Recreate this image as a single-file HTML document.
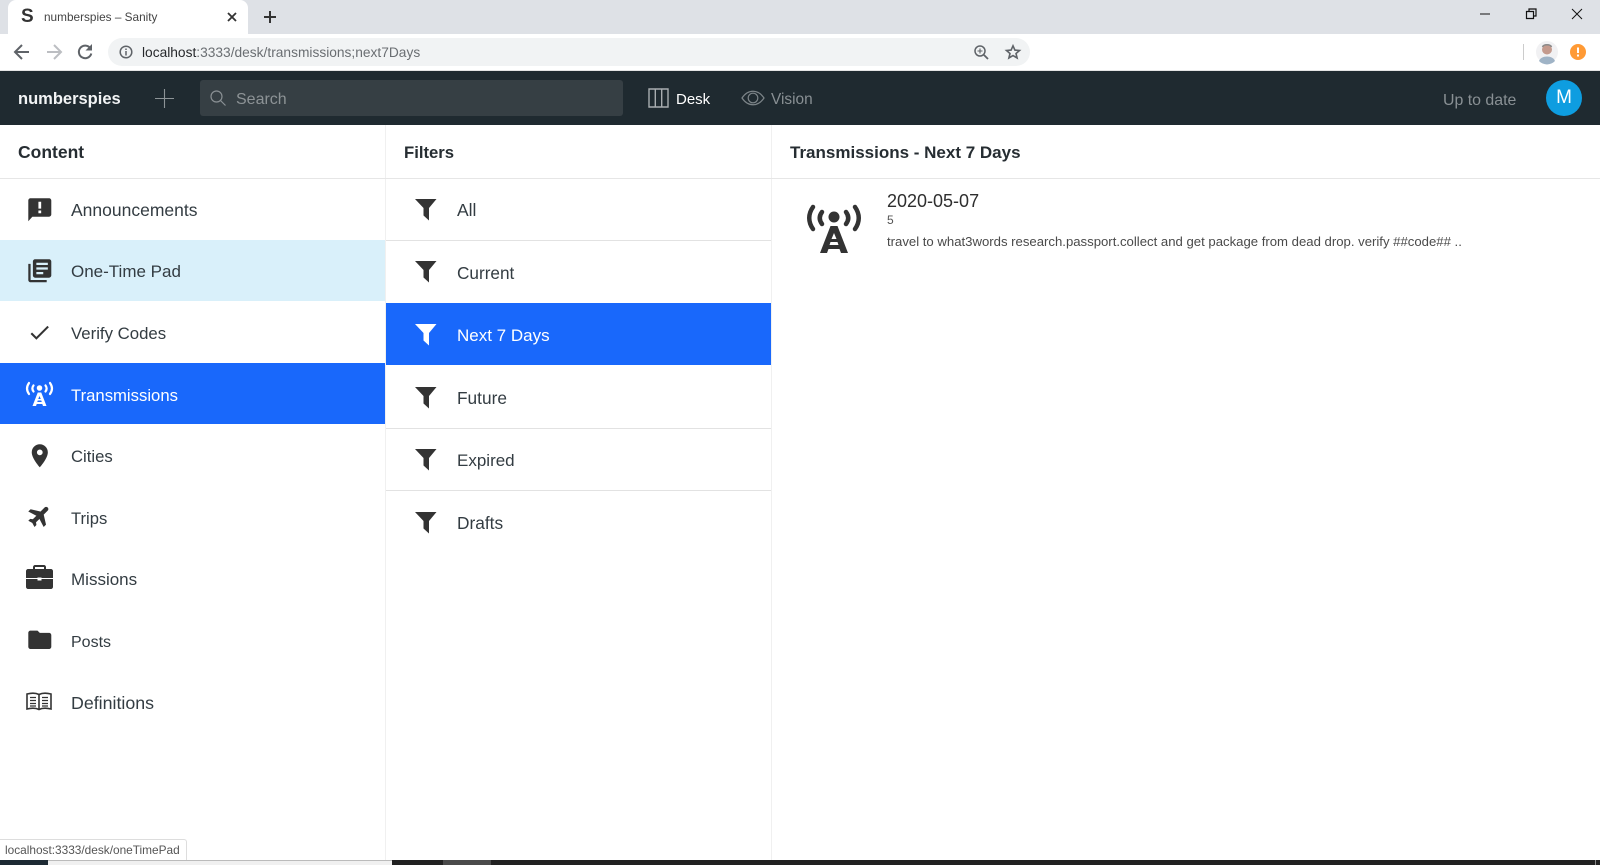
<!DOCTYPE html>
<html><head><meta charset="utf-8"><title>numberspies – Sanity</title>
<style>
html,body{margin:0;padding:0;width:1600px;height:865px;overflow:hidden;background:#fff;font-family:"Liberation Sans",sans-serif}
.a{position:absolute}
.t{position:absolute;white-space:nowrap;line-height:24px;height:24px;margin-top:-12px;color:#333c42;font-size:17.5px}
.h{font-weight:bold;color:#262d32;font-size:17px}
svg{position:absolute;overflow:visible}
.i{fill:#333}
.w{color:#fff}
</style></head><body>
<!-- chrome -->
<div class="a" style="left:0;top:0;width:1600px;height:34px;background:#dee1e6"></div>
<div class="a" style="left:8px;top:0;width:240px;height:34px;background:#fff;border-radius:8px 8px 0 0"></div>
<div class="t" style="left:21px;top:17px;font-size:19px;font-weight:bold;color:#333">S</div>
<div class="t" style="left:44px;top:17px;font-size:11.8px;color:#444">numberspies – Sanity</div>
<svg style="left:0;top:0" width="300" height="34"><path d="M228 13l8 8M236 13l-8 8" stroke="#333" stroke-width="1.8"/><path d="M270 11v12M264 17h12" stroke="#333" stroke-width="2"/></svg>
<svg style="left:0;top:34px" width="110" height="36"><g fill="none" stroke-width="2"><path d="M29 18H16M22 11l-7 7 7 7" stroke="#5f6368"/><path d="M47 18h13M54 11l7 7-7 7" stroke="#bcbec2"/><path d="M90.500 14.500a6.300 6.300 0 1 0 .8 5" stroke="#5f6368"/></g><path d="M92 10v6.500h-6.500z" fill="#5f6368"/></svg>
<div class="a" style="left:108px;top:38px;width:922px;height:28px;background:#f1f3f4;border-radius:14px"></div>
<svg style="left:119px;top:45px" width="14" height="14"><circle cx="7" cy="7" r="5.8" fill="none" stroke="#5f6368" stroke-width="1.5"/><path d="M7 6v4.500M7 3.500v1.500" stroke="#5f6368" stroke-width="1.5"/></svg>
<div class="t" style="left:142px;top:53px;font-size:13.75px;color:#6a6e72"><span style="color:#26282b">localhost</span>:3333/desk/transmissions;next7Days</div>
<svg style="left:973px;top:44px" width="16" height="16"><circle cx="7" cy="7" r="5" fill="none" stroke="#5f6368" stroke-width="1.5"/><path d="M11 11l4 4" stroke="#5f6368" stroke-width="1.8"/><path d="M7 4.500v5M4.500 7h5" stroke="#5f6368" stroke-width="1.1"/></svg>
<svg style="left:1005px;top:44px" width="16" height="16"><path d="M8 1.800l1.900 4.300 4.600.4-3.500 3 1.100 4.500-4.100-2.400-4.100 2.400 1.100-4.500-3.500-3 4.600-.4z" fill="none" stroke="#5f6368" stroke-width="1.6"/></svg>
<div class="a" style="left:1523px;top:44px;width:1px;height:16px;background:#ccc"></div>
<svg style="left:1536px;top:41px" width="22" height="22"><circle cx="11" cy="11" r="11" fill="#f1f1f3"/><circle cx="11" cy="8.500" r="5" fill="#c49a8d"/><path d="M3 20c2-6 14-6 16 0a11 11 0 0 1-16 0z" fill="#9fb3c6"/><path d="M6.500 6c1-3 8-3 9 0" fill="none" stroke="#8a8a8a" stroke-width="1.5"/></svg>
<svg style="left:1570px;top:44px" width="16" height="16"><circle cx="8" cy="8" r="8" fill="#ff9a35"/><path d="M8 3.500v5.500M8 10.500v2" stroke="#fff" stroke-width="2"/></svg>
<svg style="left:1470px;top:4px" width="125" height="24"><path d="M10 10h10" stroke="#111" stroke-width="1"/><path d="M56.500 7.500h7v7h-7zM59 7.500v-2.500h7v7h-2.500" fill="none" stroke="#111" stroke-width="1.2"/><path d="M102 5l10 10M112 5l-10 10" stroke="#111" stroke-width="1"/></svg>
<div class="a" style="left:0;top:70px;width:1600px;height:1px;background:#e4e4e4"></div>
<!-- nav -->
<div class="a" style="left:0;top:71px;width:1600px;height:54px;background:#1f2a30"></div>
<div class="t h" style="left:18px;top:99px;color:#f2f4f5;font-size:16.5px">numberspies</div>
<svg style="left:155px;top:89px" width="19" height="19"><path d="M9.500 0v19M0 9.500h19" stroke="#8d9497" stroke-width="1.1"/></svg>
<div class="a" style="left:200px;top:80px;width:423px;height:36px;background:#363f44;border-radius:3px"></div>
<svg style="left:210px;top:90px" width="16" height="16"><circle cx="6.500" cy="6.500" r="5.500" fill="none" stroke="#8a9094" stroke-width="1.2"/><path d="M10.500 10.500l5 5" stroke="#8a9094" stroke-width="1.2"/></svg>
<div class="t" style="left:236px;top:100px;color:#8d9396;font-size:16px">Search</div>
<svg style="left:648px;top:88px" width="21" height="20"><path d="M1 1h19v18H1zM7.300 1v18M13.700 1v18" fill="none" stroke="#a8adb0" stroke-width="1.4"/></svg>
<div class="t w" style="left:676px;top:100px;font-size:15px">Desk</div>
<svg style="left:741px;top:90px" width="24" height="16"><path d="M1 8c6-9 16-9 22 0-6 9-16 9-22 0z" fill="none" stroke="#7c8488" stroke-width="1.2"/><circle cx="12" cy="8" r="4.800" fill="none" stroke="#7c8488" stroke-width="1.2"/></svg>
<div class="t" style="left:771px;top:100px;font-size:15.4px;color:#899094">Vision</div>
<div class="t" style="left:1443px;top:101px;font-size:15.9px;color:#899094">Up to date</div>
<div class="a" style="left:1546px;top:80px;width:36px;height:36px;border-radius:50%;background:#0e9de0;color:#fff;text-align:center;font-size:19px;line-height:36px">M</div>
<!-- pane dividers -->
<div class="a" style="left:385px;top:125px;width:1px;height:735px;background:#f0f0f0"></div>
<div class="a" style="left:771px;top:125px;width:1px;height:735px;background:#f0f0f0"></div>
<div class="a" style="left:0;top:178px;width:1600px;height:1px;background:#e6e6e6"></div>
<div class="t h" style="left:18px;top:152px;font-size:17.5px">Content</div>
<div class="t h" style="left:404px;top:153px;font-size:16.7px">Filters</div>
<div class="t h" style="left:790px;top:153px">Transmissions - Next 7 Days</div>
<!-- left list -->
<div class="a" style="left:0;top:240px;width:385px;height:61px;background:#d9f0fa"></div>
<div class="a" style="left:0;top:363px;width:385px;height:61px;background:#1968fb"></div>
<div class="t" style="left:71px;top:210px">Announcements</div>
<div class="t" style="left:71px;top:272px;font-size:17px">One-Time Pad</div>
<div class="t" style="left:71px;top:334px;font-size:16.8px">Verify Codes</div>
<div class="t w" style="left:71px;top:396px;font-size:16.7px">Transmissions</div>
<div class="t" style="left:71px;top:457px;font-size:16.7px">Cities</div>
<div class="t" style="left:71px;top:519px;font-size:16.6px">Trips</div>
<div class="t" style="left:71px;top:580px;font-size:17px">Missions</div>
<div class="t" style="left:71px;top:643px;font-size:16px">Posts</div>
<div class="t" style="left:71px;top:703px;font-size:17.8px">Definitions</div>
<svg class="i" style="left:25.700px;top:195.700px" width="27.600" height="27.600" viewBox="0 0 24 24"><path d="M20 2H4c-1.100 0-2 .9-2 2v18l3.500-4H20c1.100 0 2-.9 2-2V4c0-1.100-.9-2-2-2zm-6.800 9h-2.400V5h2.400v6zm0 4h-2.400v-2.400h2.400V15z"/></svg>
<svg class="i" style="left:25.700px;top:256.700px" width="27.600" height="27.600" viewBox="0 0 24 24"><path d="M4 6H2v14c0 1.100.9 2 2 2h14v-2H4V6zm16-4H8c-1.100 0-2 .9-2 2v12c0 1.100.9 2 2 2h12c1.100 0 2-.9 2-2V4c0-1.100-.9-2-2-2zm-1 9H9V9h10v2zm-4 4H9v-2h6v2zm4-8H9V5h10v2z"/></svg>
<svg class="i" style="left:26.500px;top:320px" width="25" height="25" viewBox="0 0 24 24"><path d="M9 16.170L4.830 12l-1.420 1.410L9 19 21 7l-1.410-1.410z"/></svg>
<svg style="left:26px;top:381px" width="27" height="26" viewBox="0 0 54 50"><g fill="none" stroke="#fff" stroke-width="4.500" stroke-linecap="round"><path d="M6 3c-5 7-5 15 0 22M48 3c5 7 5 15 0 22M15 8c-3 4-3 8 0 12M39 8c3 4 3 8 0 12"/></g><circle cx="27" cy="13" r="5.500" fill="#fff"/><path fill="#fff" fill-rule="evenodd" d="M23.500 22h7l10.500 27h-7l-1.500-4h-11L20 49h-7zM27 29l-2.500 6h5zM23.500 38l-1 3h9l-1-3z"/></svg>
<svg class="i" style="left:25.700px;top:441.700px" width="27.600" height="27.600" viewBox="0 0 24 24"><path d="M12 2C8.130 2 5 5.130 5 9c0 5.250 7 13 7 13s7-7.750 7-13c0-3.870-3.130-7-7-7zm0 9.500a2.500 2.500 0 0 1 0-5 2.500 2.500 0 0 1 0 5z"/></svg>
<svg class="i" style="left:27px;top:503px" width="26" height="26" viewBox="0 0 24 24"><path stroke="#333" stroke-width="1.1" transform="rotate(45 12 12)" d="M21 16v-2l-8-5V3.500c0-.83-.67-1.500-1.500-1.500S10 2.670 10 3.500V9l-8 5v2l8-2.500V19l-2 1.500V22l3.500-1 3.500 1v-1.500L13 19v-5.500l8 2.500z"/></svg>
<svg style="left:26px;top:565px" width="27" height="24" viewBox="0 0 27 24"><path class="i" fill-rule="evenodd" d="M9 0h9c1 0 2 1 2 2v2h5c1 0 2 1 2 2v16c0 1-1 2-2 2H2c-1 0-2-1-2-2V6c0-1 1-2 2-2h5V2c0-1 1-2 2-2zm0 2v2h9V2z"/><path d="M0 13.500h27" stroke="#fff" stroke-width="1"/><path d="M11.500 12.500h4v3h-4z" fill="#fff"/></svg>
<svg class="i" style="left:25.700px;top:626.400px" width="27.600" height="27.600" viewBox="0 0 24 24"><path d="M10 4H4c-1.100 0-2 .9-2 2v12c0 1.100.9 2 2 2h16c1.100 0 2-.9 2-2V8c0-1.100-.9-2-2-2h-8l-2-2z"/></svg>
<svg style="left:26px;top:692px" width="26" height="19" viewBox="0 0 26 19"><path d="M13 2.500C10 1 5 1 1 2v15c4-1 9-1 12 .5 3-1.500 8-1.500 12-.5V2c-4-1-9-1-12 .5zM13 2.500v15" fill="none" stroke="#333" stroke-width="1.6"/><path d="M4 5.500h6M4 8.500h6M4 11.500h6M4 14h6M16 5.500h6M16 8.500h6M16 11.500h6M16 14h6" stroke="#333" stroke-width="1.2"/></svg>
<!-- middle list -->
<div class="a" style="left:386px;top:240px;width:385px;height:1px;background:#e2e2e2"></div>
<div class="a" style="left:386px;top:303px;width:385px;height:62px;background:#1968fb"></div>
<div class="a" style="left:386px;top:428px;width:385px;height:1px;background:#e2e2e2"></div>
<div class="a" style="left:386px;top:490px;width:385px;height:1px;background:#e2e2e2"></div>
<div class="t" style="left:457px;top:210px">All</div>
<div class="t" style="left:457px;top:273px;font-size:17.2px">Current</div>
<div class="t w" style="left:457px;top:336px;font-size:17px">Next 7 Days</div>
<div class="t" style="left:457px;top:398px;font-size:17.3px">Future</div>
<div class="t" style="left:457px;top:461px;font-size:17px">Expired</div>
<div class="t" style="left:457px;top:523px;font-size:17.3px">Drafts</div>
<svg class="i" style="left:415px;top:199px" width="22" height="22"><path d="M0 0h21.500l-7.500 9v12.500l-5.500-5V9z"/></svg>
<svg class="i" style="left:415px;top:261px" width="22" height="22"><path d="M0 0h21.500l-7.500 9v12.500l-5.500-5V9z"/></svg>
<svg style="left:415px;top:324px" width="22" height="22"><path fill="#fff" d="M0 0h21.500l-7.500 9v12.500l-5.500-5V9z"/></svg>
<svg class="i" style="left:415px;top:387px" width="22" height="22"><path d="M0 0h21.500l-7.500 9v12.500l-5.500-5V9z"/></svg>
<svg class="i" style="left:415px;top:449px" width="22" height="22"><path d="M0 0h21.500l-7.500 9v12.500l-5.500-5V9z"/></svg>
<svg class="i" style="left:415px;top:512px" width="22" height="22"><path d="M0 0h21.500l-7.500 9v12.500l-5.500-5V9z"/></svg>
<!-- right -->
<svg style="left:807px;top:204px" width="54" height="50" viewBox="0 0 54 50"><g fill="none" stroke="#333" stroke-width="4.500" stroke-linecap="round"><path d="M6 3c-5 7-5 15 0 22M48 3c5 7 5 15 0 22M15 8c-3 4-3 8 0 12M39 8c3 4 3 8 0 12"/></g><circle cx="27" cy="13" r="5.500" fill="#333"/><path fill="#333" fill-rule="evenodd" d="M23.500 22h7l10.500 27h-7l-1.500-4h-11L20 49h-7zM27 29l-2.500 6h5zM23.500 38l-1 3h9l-1-3z"/></svg>
<div class="t" style="left:887px;top:201px;font-size:18px;color:#2e2e2e">2020-05-07</div>
<div class="t" style="left:887px;top:220px;font-size:12px;color:#555">5</div>
<div class="t" style="left:887px;top:242px;font-size:13.15px;color:#4a4a4a">travel to what3words research.passport.collect and get package from dead drop. verify ##code## ..</div>
<!-- status -->
<div class="a" style="left:0;top:839px;width:187px;height:21px;background:#fff;border:1px solid #ddd;border-left:0;border-bottom:0;border-radius:0 3px 0 0;box-sizing:border-box"></div>
<div class="t" style="left:5px;top:850px;font-size:11.85px;color:#555">localhost:3333/desk/oneTimePad</div>
<!-- bottom strip -->
<div class="a" style="left:0;top:860px;width:1600px;height:5px;background:#212121"></div>
<div class="a" style="left:0;top:860px;width:48px;height:5px;background:#1d2a33"></div>
<div class="a" style="left:48px;top:860px;width:344px;height:5px;background:#f0f0f0;border-top:1px solid #bbb;box-sizing:border-box"></div>
<div class="a" style="left:443px;top:860px;width:48px;height:5px;background:#4a4a4a"></div>
<div class="a" style="left:1595px;top:860px;width:1px;height:5px;background:#888"></div>
</body></html>
